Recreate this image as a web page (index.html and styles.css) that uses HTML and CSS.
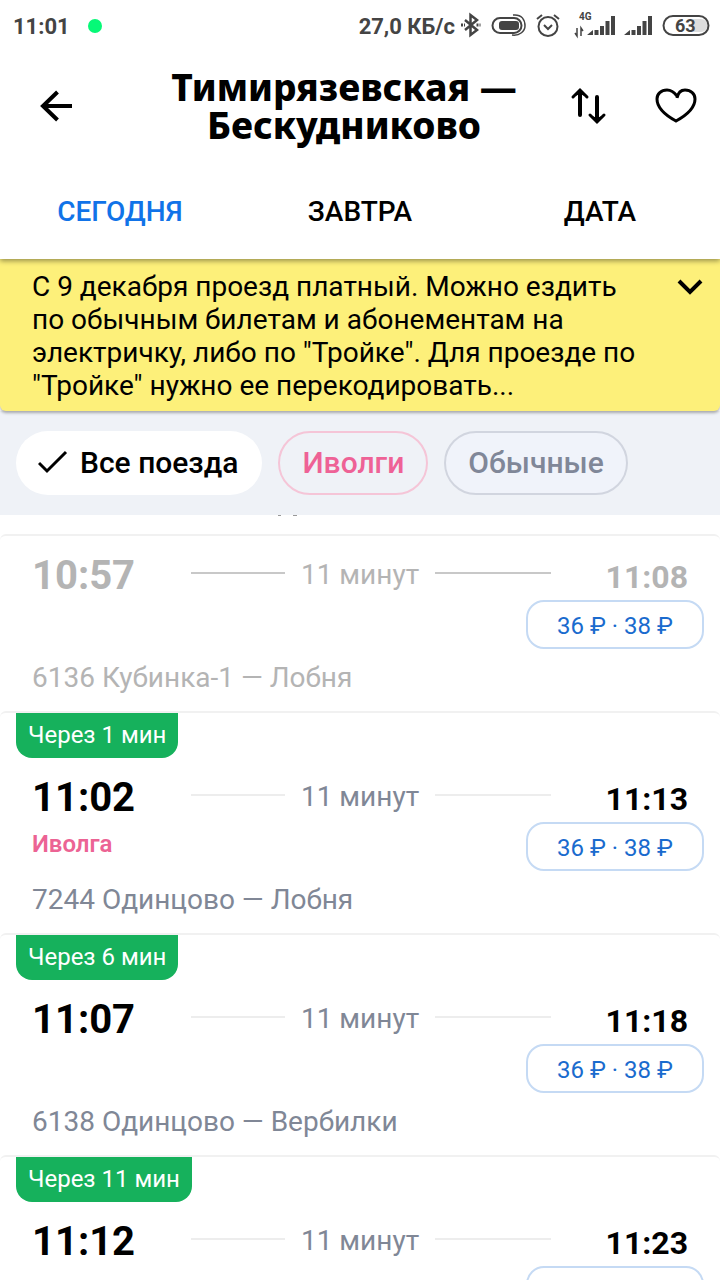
FILE: index.html
```html
<!DOCTYPE html>
<html lang="ru">
<head>
<meta charset="utf-8">
<meta name="viewport" content="width=device-width, initial-scale=1">
<title>Тимирязевская — Бескудниково</title>
<link rel="stylesheet" href="styles.css">
</head>
<body>
<div class="app">
  <header class="header">
    <div class="status">
      <span class="status-time">11:01</span>
      <span class="status-dot"></span>
      <span class="status-speed">27,0 КБ/с</span>
      <svg class="status-icons" width="262" height="32" viewBox="0 0 262 32" fill="none" stroke="#444" stroke-width="2">
        <path d="M7 10l12 10-6.500 5V5l6.500 5L7 20" stroke-width="2.500"/>
        <path d="M3 15h4M18.500 15h4" stroke-width="3" stroke-dasharray="2 1"/>
        <rect x="34.500" y="8" width="29" height="15" rx="7.500"/>
        <rect x="41" y="11" width="20" height="9" rx="3" fill="#444" stroke="none"/>
        <path d="M55 5c9-1 12 5 12 11 0 5-5 10-13 9" stroke-width="1.500"/>
        <circle cx="90" cy="16.500" r="9.500"/>
        <path d="M86 15l4 4 4-4M79 9l5-4M101 9l-5-4"/>
        <path d="M119 18v8l-2-3M123 26v-8l2 3" stroke-width="1.500"/>
        <g fill="#444" stroke="none">
          <path d="M129 25l6-5v5zM136.500 20h4v5h-4zM142 16h4v9h-4zM147.500 11h4v14h-4zM153 6h4v19h-4z"/>
          <path d="M166 25l6-5v5zM173.500 20h4v5h-4zM179 16h4v9h-4zM184.500 11h4v14h-4zM190 6h4v19h-4z"/>
          <text x="121" y="10" font-family="Roboto" font-size="10" font-weight="700">4G</text>
          <path d="M235 9h8a6 6 0 0 1 0 13h-8z" fill="#ddd"/>
        </g>
        <rect x="205.500" y="6" width="45" height="19" rx="9.500"/>
        <text x="217" y="22" font-family="Roboto" font-size="18" font-weight="700" fill="#444" stroke="none">63</text>
      </svg>
    </div>
    <div class="toolbar">
      <button class="icon-button back" aria-label="Назад">
        <svg width="36" height="36" viewBox="0 0 36 36" fill="none" stroke="#000" stroke-width="4"><path d="M34 18H5M19.500 4L5 18l14.500 14"/></svg>
      </button>
      <h1 class="title">Тимирязевская —<br>Бескудниково</h1>
      <button class="icon-button" aria-label="Поменять направление">
        <svg width="40" height="40" viewBox="0 0 40 40" fill="none" stroke="#000" stroke-width="4" stroke-linecap="round"><path d="M12 29V7M29 11v22"/><path d="M5 11l7-7 7 7M22 29l7 7 7-7" stroke-width="3"/><path d="M12 3l7 8-7-3-7 3zM29 37l7-8-7 3-7-3z" fill="#000" stroke="none"/></svg>
      </button>
      <button class="icon-button" aria-label="В избранное">
        <svg width="46" height="40" viewBox="0 0 46 40" fill="none" stroke="#000" stroke-width="3"><path d="M24 12C25 7 28 4 32 4c6 0 10 4 10 9 0 9-8 16-19 22C12 29 4 22 4 13c0-5 4-9 10-9 4 0 7 2 10 6"/></svg>
      </button>
    </div>
    <nav class="tabs">
      <button class="tab tab-active">СЕГОДНЯ</button>
      <button class="tab">ЗАВТРА</button>
      <button class="tab">ДАТА</button>
    </nav>
  </header>

  <section class="notice">
    <p class="notice-text">С 9 декабря проезд платный. Можно ездить по обычным билетам и абонементам на электричку, либо по "Тройке". Для проезде по "Тройке" нужно ее перекодировать...</p>
    <button class="notice-toggle" aria-label="Развернуть">
      <svg width="26" height="18" viewBox="0 0 26 18" fill="none" stroke="#000" stroke-width="4"><path d="M2 3l11 11L24 3"/></svg>
    </button>
  </section>

  <div class="filters">
    <button class="chip chip-all">
      <svg width="30" height="24" viewBox="0 0 30 24" fill="none" stroke="#000" stroke-width="3"><path d="M1 13l8 8L28 2"/></svg>
      Все поезда
    </button>
    <button class="chip chip-pink">Иволги</button>
    <button class="chip chip-grey">Обычные</button>
  </div>

  <main class="list">
    <div class="scrolled">
      <svg width="26" height="3" viewBox="0 0 26 3" fill="none" stroke="#999" stroke-width="1"><path d="M2 .5h3M17 .5h4"/></svg>
    </div>

    <article class="trip trip-past">
      <div class="times"><span class="departure">10:57</span><span class="line line-a"></span><span class="duration">11 минут</span><span class="line line-b"></span><span class="arrival">11:08</span></div>
      <div class="details"><span class="brand"></span><button class="price">36 ₽ · 38 ₽</button></div>
      <p class="route">6136 Кубинка-1 — Лобня</p>
    </article>

    <article class="trip">
      <span class="badge">Через 1 мин</span>
      <div class="times"><span class="departure">11:02</span><span class="line line-a"></span><span class="duration">11 минут</span><span class="line line-b"></span><span class="arrival">11:13</span></div>
      <div class="details"><span class="brand">Иволга</span><button class="price">36 ₽ · 38 ₽</button></div>
      <p class="route">7244 Одинцово — Лобня</p>
    </article>

    <article class="trip">
      <span class="badge">Через 6 мин</span>
      <div class="times"><span class="departure">11:07</span><span class="line line-a"></span><span class="duration">11 минут</span><span class="line line-b"></span><span class="arrival">11:18</span></div>
      <div class="details"><span class="brand"></span><button class="price">36 ₽ · 38 ₽</button></div>
      <p class="route">6138 Одинцово — Вербилки</p>
    </article>

    <article class="trip">
      <span class="badge">Через 11 мин</span>
      <div class="times"><span class="departure">11:12</span><span class="line line-a"></span><span class="duration">11 минут</span><span class="line line-b"></span><span class="arrival">11:23</span></div>
      <div class="details"><span class="brand"></span><button class="price" aria-label="Цена"></button></div>
    </article>
  </main>
</div>
</body>
</html>
```
FILE: styles.css
```css
* { box-sizing: border-box; }

body {
  margin: 0;
  font-family: Roboto, "Noto Sans", sans-serif;
  font-size: 28px;
  line-height: 33px;
  color: #000;
  background: #fff;
}

button {
  margin: 0;
  padding: 0;
  border: 0;
  background: none;
  font: inherit;
  color: inherit;
  cursor: pointer;
}

svg { display: block; flex: none; }
h1, p { margin: 0; }

.app {
  display: flex;
  flex-direction: column;
  height: 100vh;
  overflow: hidden;
}

/* Header */
.header {
  flex: none;
  background: #fff;
  position: relative;
  z-index: 2;
  box-shadow: 0 2px 5px rgba(0, 0, 0, 0.4);
}

.status {
  display: flex;
  align-items: center;
  height: 52px;
  padding-left: 13px;
  font-size: 22px;
  font-weight: 700;
  color: #444;
}

.status-dot {
  width: 14px;
  height: 14px;
  margin-left: 18px;
  border-radius: 50%;
  background: #06f977;
}

.status-speed {
  margin-left: auto;
  margin-right: 3px;
}

.toolbar {
  display: flex;
  align-items: center;
  height: 112px;
  padding: 0 8px 4px 20px;
}

.icon-button {
  display: flex;
  align-items: center;
  justify-content: center;
  width: 72px;
  height: 72px;
}

.icon-button + .icon-button { margin-left: 16px; }

.title {
  flex: 1;
  padding-left: 44px;
  font-family: "Noto Sans", sans-serif;
  font-size: 37px;
  font-weight: 800;
  line-height: 38px;
  text-align: center;
  white-space: nowrap;
}

.tabs {
  display: grid;
  grid-template-columns: repeat(3, 1fr);
  height: 95px;
}

.tab { font-weight: 500; }
.tab-active { color: #1173e8; }

/* Notice */
.notice {
  flex: none;
  display: flex;
  align-items: flex-start;
  padding: 11px 17px 9px 32px;
  background: #fdf07a;
  border-radius: 0 0 6px 6px;
  position: relative;
  z-index: 1;
  box-shadow: 0 2px 3px rgba(0, 0, 0, 0.3);
}

.notice-text { flex: 1; padding-right: 32px; }
.notice-toggle { padding-top: 8px; }

/* Filters */
.filters {
  flex: none;
  display: flex;
  gap: 16px;
  padding: 20px 16px;
  background: #eff2f7;
}

.chip {
  display: flex;
  align-items: center;
  justify-content: center;
  gap: 12px;
  height: 64px;
  padding: 0 22px 2px;
  border: 2px solid transparent;
  border-radius: 32px;
  font-size: 30px;
  font-weight: 500;
}

.chip-all { padding-left: 20px; background: #fff; }
.chip-pink { border-color: #f5c5d7; color: #ee6296; }
.chip-grey { border-color: #d1d5df; color: #808798; background: #f0f3fa; }

/* Trips */
.list {
  flex: 1;
  min-height: 0;
  overflow: hidden;
}

.scrolled {
  height: 19px;
  padding-left: 276px;
}

.trip {
  border-top: 2px solid #f1f1f1;
  border-radius: 6px 6px 0 0;
}

.badge {
  display: block;
  width: fit-content;
  height: 45px;
  margin-left: 16px;
  padding: 0 12px;
  border-radius: 0 0 16px 16px;
  background: #16b15c;
  color: #fff;
  font-size: 24px;
  line-height: 44px;
}

.times {
  display: flex;
  align-items: center;
  height: 64px;
  padding: 14px 32px 0;
}

.departure {
  width: 159px;
  font-size: 40px;
  font-weight: 700;
}

.line {
  height: 2px;
  margin-bottom: 4px;
  background: #ededed;
}

.line-a { flex: 94; }
.line-b { flex: 116; }

.duration {
  padding: 0 16px 2px;
  color: #808796;
}

.arrival {
  width: 137px;
  padding-top: 4px;
  font-size: 32px;
  font-weight: 700;
  text-align: right;
}

.details {
  display: flex;
  justify-content: space-between;
  align-items: flex-start;
  padding: 0 16px 0 32px;
}

.brand {
  color: #ec6394;
  font-size: 24px;
  font-weight: 600;
  line-height: 44px;
}

.price {
  width: 178px;
  height: 49px;
  padding-top: 3px;
  border: 2px solid #c5daf4;
  border-radius: 18px;
  color: #1a6bce;
  font-size: 24px;
}

.route {
  padding: 12px 32px 17px;
  color: #808796;
}

.trip-past .departure,
.trip-past .duration,
.trip-past .arrival,
.trip-past .route { color: #b4b4b4; }
.trip-past .line { background: #c8c8c8; }
```
